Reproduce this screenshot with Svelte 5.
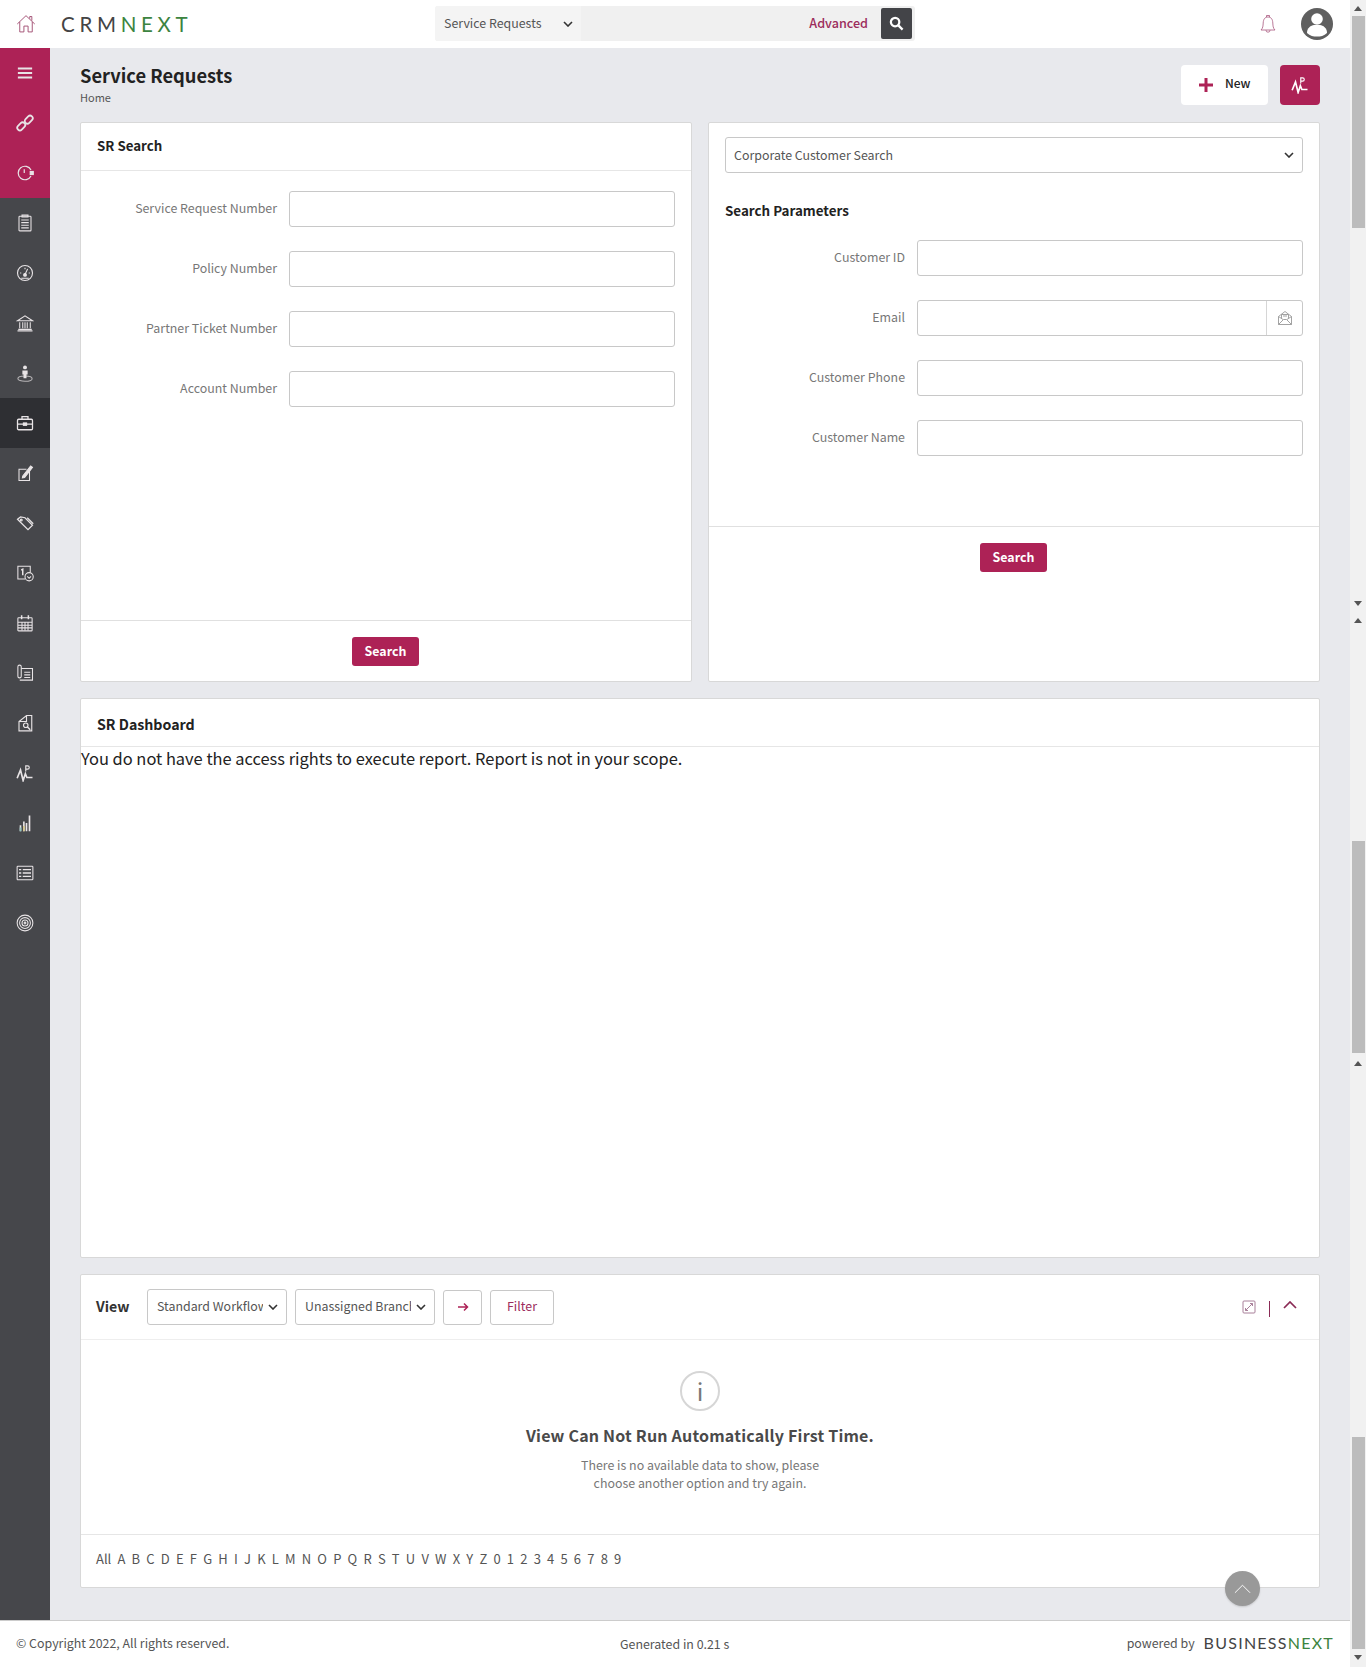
<script>
  const letters = ['All','A','B','C','D','E','F','G','H','I','J','K','L','M','N','O','P','Q','R','S','T','U','V','W','X','Y','Z','0','1','2','3','4','5','6','7','8','9'];
  const srFields = ['Service Request Number','Policy Number','Partner Ticket Number','Account Number'];
</script>

{#snippet pulse()}
  <svg viewBox="0 0 24 24" class="ic" fill="none" stroke="currentColor" stroke-width="1.5"><path d="M1.5 19 L6 8 L9.5 22 L12.5 13 L14.5 18 H22" stroke-width="2.2"/><path d="M13 10 V2.5 H15.5 a2 2 0 0 1 0 4.4 H13" stroke-width="1.5"/></svg>
{/snippet}
{#snippet chevron()}
  <svg class="chev" viewBox="0 0 10 6" fill="none" stroke="currentColor" stroke-width="1.6"><path d="M1 1 L5 5 L9 1"/></svg>
{/snippet}

<div class="page">
  <div class="app">
    <header class="top">
      <div class="top-left">
        <svg class="home" viewBox="0 0 24 24" fill="none" stroke="#a04a70" stroke-width="1.1"><path d="M1.5 12 L12 2 L22.5 12"/><path d="M4.5 9.5 V21.5 H9.5 V14.5 H14.5 V21.5 H19.5 V9.5"/><path d="M16.5 5.5 V3 H19 V8"/></svg>
        <div class="logo">CRM<span class="green">NEXT</span></div>
      </div>
      <div class="search">
        <div class="search-type"><span>Service Requests</span>{@render chevron()}</div>
        <div class="search-fill"></div>
        <span class="adv">Advanced</span>
        <div class="search-btn">
          <svg viewBox="0 0 16 16" fill="none" stroke="#fff" stroke-width="2.4"><circle cx="6.5" cy="6.5" r="4.5"/><path d="M10 10 L14.5 14.5"/></svg>
        </div>
      </div>
      <div class="top-right">
        <svg class="bell" viewBox="0 0 16 20" fill="none" stroke="#a8577d" stroke-width="0.8"><path d="M1 16 C3 14 3 12 3.2 9 C3.4 5 5 3 8 3 C11 3 12.6 5 12.8 9 C13 12 13 14 15 16 Z"/><path d="M6.5 3 V1.5 H9.5 V3 M6 16.2 a2 2 0 0 0 4 0"/></svg>
        <svg class="avatar" viewBox="0 0 32 32"><circle cx="16" cy="16" r="16" fill="#5f5f5f"/><circle cx="16" cy="11" r="5.8" fill="#fff"/><path d="M6 25 C6 19.5 10 17.5 13 17 H19 C22 17.5 26 19.5 26 25 C23 28 19.5 28.5 16 28.5 C12.5 28.5 9 28 6 25 Z" fill="#fff"/></svg>
      </div>
    </header>

    <div class="mid">
      <nav class="side">
        <div class="crimson">
          <div class="nav"><svg viewBox="0 0 24 24" class="ic" fill="none" stroke="currentColor" stroke-width="2.4"><path d="M2.5 6 H21.5 M2.5 12 H21.5 M2.5 18 H21.5"/></svg></div>
          <div class="nav"><svg viewBox="0 0 24 24" class="ic" fill="none" stroke="currentColor" stroke-width="2.4"><rect x="1" y="13" width="12" height="7" rx="3.5" transform="rotate(-45 7 16.5)"/><rect x="11" y="4" width="12" height="7" rx="3.5" transform="rotate(-45 17 7.5)"/></svg></div>
          <div class="nav"><svg viewBox="0 0 24 24" class="ic" fill="none" stroke="currentColor" stroke-width="1.6"><path d="M20 8 A9 9 0 1 0 20 16"/><path d="M11 7 V12"/><rect x="19" y="10" width="4" height="4" fill="currentColor"/></svg></div>
        </div>
        <div class="dark">
          <div class="nav"><svg viewBox="0 0 24 24" class="ic" fill="none" stroke="currentColor" stroke-width="1.4"><rect x="4" y="3" width="16" height="19.5" rx="1"/><path d="M8 1.5 H16 V4 H8 Z M7 8 H17 M7 11.5 H17 M7 15 H17 M7 18.5 H17"/></svg></div>
          <div class="nav"><svg viewBox="0 0 24 24" class="ic" fill="none" stroke="currentColor" stroke-width="1.5"><circle cx="12" cy="12" r="10"/><path d="M7 19 H17 M12 14 L15.5 6.5 M5.5 12 H7 M17 12 H18.5 M12 5 V7"/><circle cx="12" cy="14.5" r="1.8" fill="currentColor"/></svg></div>
          <div class="nav"><svg viewBox="0 0 24 24" class="ic" fill="none" stroke="currentColor" stroke-width="1.4"><path d="M2 9 L12 2.5 L22 9 Z M3 20.5 H21 M2 22.5 H22 M5 11 V19 M9 11 V19 M12 11 V19 M15 11 V19 M19 11 V19"/></svg></div>
          <div class="nav"><svg viewBox="0 0 24 24" class="ic" fill="currentColor"><circle cx="12" cy="4.5" r="2.6"/><path d="M8.5 8.5 H15.5 V14 H14 V19 H10 V14 H8.5 Z"/><ellipse cx="12" cy="19.5" rx="9.5" ry="3.4" fill="none" stroke="currentColor" stroke-width="1.4" opacity=".7"/></svg></div>
          <div class="nav active"><svg viewBox="0 0 24 24" class="ic" fill="none" stroke="currentColor" stroke-width="1.7"><rect x="2" y="7" width="20" height="14" rx="1.5"/><path d="M8 7 V3.5 H16 V7 M2 13.5 H22"/><rect x="10" y="12" width="4" height="3" fill="currentColor"/></svg></div>
          <div class="nav"><svg viewBox="0 0 24 24" class="ic" fill="none" stroke="currentColor" stroke-width="1.4"><path d="M18 9 V22 H4 V7 H14"/><path d="M9 16 L19.5 2.5 L22 4.5 L11.5 18 L8.5 18.5 Z" fill="currentColor"/></svg></div>
          <div class="nav"><svg viewBox="0 0 24 24" class="ic" fill="none" stroke="currentColor" stroke-width="1.6"><path d="M2 7 L6 4 L12 5 L22 15 L16 21 L6 11 Z"/><circle cx="7" cy="8" r="1.2"/><path d="M15 5 L23 13"/></svg></div>
          <div class="nav"><svg viewBox="0 0 24 24" class="ic" fill="none" stroke="currentColor" stroke-width="1.4"><path d="M12 20 H2.5 V3 H19 V11"/><path d="M7 8 L9 7 V15" stroke-width="2"/><circle cx="17.5" cy="17" r="5.5"/><path d="M15 16.5 L17.5 19 L20 16.5"/></svg></div>
          <div class="nav"><svg viewBox="0 0 24 24" class="ic" fill="none" stroke="currentColor" stroke-width="1.4"><rect x="2.5" y="5" width="19" height="17.5" rx="1"/><path d="M2.5 11 H21.5 M2.5 15 H21.5 M2.5 18.5 H21.5 M8 11 V22 M12 11 V22 M16 11 V22"/><path d="M7.5 1.5 V7 M16.5 1.5 V7" stroke-width="2"/></svg></div>
          <div class="nav"><svg viewBox="0 0 24 24" class="ic" fill="none" stroke="currentColor" stroke-width="1.4"><rect x="2.5" y="1.5" width="4.5" height="17" rx="2.2"/><path d="M7 6 H22 V21.5 H5 M11 11 H19 M11 14.5 H19 M11 18 H19"/></svg></div>
          <div class="nav"><svg viewBox="0 0 24 24" class="ic" fill="none" stroke="currentColor" stroke-width="1.5"><path d="M14 2 H21 V22.5 H4 V10 Z M14 2 V10 H4"/><circle cx="13" cy="15" r="3"/><path d="M15 17 L19 21" stroke-width="2"/></svg></div>
          <div class="nav">{@render pulse()}</div>
          <div class="nav"><svg viewBox="0 0 24 24" class="ic" fill="none" stroke="currentColor" stroke-width="2.2"><path d="M6 23 V15 M10.5 23 V10 M14 23 V12 M18 23 V2"/><path d="M6 23 V18" stroke="#8fc7c0"/><path d="M10.5 23 V16" stroke="#d8c88c"/></svg></div>
          <div class="nav"><svg viewBox="0 0 24 24" class="ic" fill="none" stroke="currentColor" stroke-width="1.4"><rect x="1.5" y="3" width="21" height="18" rx="1"/><path d="M9 7.5 H20 M9 12 H20 M9 16.5 H20 M4 7.5 H7 M4 12 H7 M4 16.5 H7" stroke-width="1.7"/></svg></div>
          <div class="nav"><svg viewBox="0 0 24 24" class="ic" fill="none" stroke="currentColor" stroke-width="1.4"><circle cx="12" cy="12" r="10.5"/><circle cx="12" cy="12" r="7.2"/><circle cx="12" cy="12" r="4"/><circle cx="12" cy="12" r="1.2"/></svg></div>
        </div>
      </nav>

      <main class="main">
        <div class="title-row">
          <div>
            <h1>Service Requests</h1>
            <div class="crumb">Home</div>
          </div>
          <div class="actions">
            <button class="new"><svg viewBox="0 0 14 14" fill="#ad2256"><path d="M5.5 0 H8.5 V5.5 H14 V8.5 H8.5 V14 H5.5 V8.5 H0 V5.5 H5.5 Z"/></svg><span>New</span></button>
            <button class="pulse-btn">{@render pulse()}</button>
          </div>
        </div>

        <div class="two">
          <section class="card search-card">
            <div class="card-head">SR Search</div>
            <div class="form sr-form">
              {#each srFields as f}
                <div class="row"><label>{f}</label><div class="input"></div></div>
              {/each}
            </div>
            <div class="card-foot"><button class="primary">Search</button></div>
          </section>
          <section class="card search-card">
            <div class="right-top">
              <div class="select-wide"><span>Corporate Customer Search</span>{@render chevron()}</div>
              <div class="params">Search Parameters</div>
              <div class="form cust-form">
                <div class="row"><label>Customer ID</label><div class="input"></div></div>
                <div class="row"><label>Email</label><div class="input group"><div class="addon">
                  <svg viewBox="0 0 16 16" fill="none" stroke="#999" stroke-width="0.9"><path d="M1.5 6.5 L8 1.5 L14.5 6.5 V14.5 H1.5 Z M1.5 14.5 L6.5 9.5 H9.5 L14.5 14.5 M1.5 6.5 L6 9.5 M14.5 6.5 L10 9.5"/><path d="M4.5 8 V4.5 H11.5 V8 M6 6 H10"/></svg>
                </div></div></div>
                <div class="row"><label>Customer Phone</label><div class="input"></div></div>
                <div class="row"><label>Customer Name</label><div class="input"></div></div>
              </div>
            </div>
            <div class="card-foot"><button class="primary">Search</button></div>
            <div class="grow"></div>
          </section>
        </div>

        <section class="card dash">
          <div class="card-head">SR Dashboard</div>
          <div class="deny">You do not have the access rights to execute report. Report is not in your scope.</div>
        </section>

        <section class="card view">
          <div class="view-head">
            <span class="view-label">View</span>
            <div class="vsel"><span class="clip">Standard Workflow</span>{@render chevron()}</div>
            <div class="vsel"><span class="clip">Unassigned Branch</span>{@render chevron()}</div>
            <button class="go"><svg viewBox="0 0 12 10" fill="none" stroke="#ad2256" stroke-width="1.5"><path d="M1 5 H10.5 M7 1.5 L10.5 5 L7 8.5"/></svg></button>
            <button class="filter">Filter</button>
            <div class="view-tools">
              <svg class="expand" viewBox="0 0 14 14" fill="none" stroke="#a9809a" stroke-width="1"><rect x="1" y="1" width="12" height="12" rx="1"/><path d="M3.5 10.5 L10.5 3.5 M8 3.5 H10.5 V6 M3.5 8 V10.5 H6"/></svg>
              <span class="vbar"></span>
              <svg class="up" viewBox="0 0 14 8" fill="none" stroke="#8a2a55" stroke-width="1.7"><path d="M1 7 L7 1 L13 7"/></svg>
            </div>
          </div>
          <div class="empty">
            <div class="info">i</div>
            <div class="empty-title">View Can Not Run Automatically First Time.</div>
            <p>There is no available data to show, please<br/>choose another option and try again.</p>
          </div>
          <div class="alpha">
            {#each letters as l}<span>{l}</span>{/each}
          </div>
        </section>
      </main>
    </div>

    <footer class="foot">
      <div class="copy">© Copyright 2022, All rights reserved.</div>
      <div class="gen">Generated in 0.21 s</div>
      <div class="powered"><span>powered by</span><span class="biz">BUSINESS<span class="green">NEXT</span></span></div>
    </footer>
  </div>

  <aside class="bars">
    <div class="seg seg1"><i class="a up-a"></i><b></b><span class="flex"></span><i class="a down-a"></i></div>
    <div class="seg seg2"><i class="a up-a"></i><span class="flex"></span><b></b><i class="a up-a last"></i></div>
    <div class="seg seg3"><span class="flex"></span><b></b><i class="a down-a"></i></div>
  </aside>

  <button class="to-top"><svg viewBox="0 0 18 10" fill="none" stroke="#fff" stroke-width="1"><path d="M1 9 L9 1 L17 9"/></svg></button>
</div>

<style>
  :global(body) { margin: 0; background: #e8e9ed; }
  :global(*) { box-sizing: border-box; }
  .page {
    position: relative; display: flex; width: 1366px; height: 1667px; overflow: hidden;
    font-family: "Noto Sans CJK SC", "Noto Sans", sans-serif; color: #222; font-size: 12.4px;
    background: #e8e9ed;
  }
  .app { width: 1350px; display: flex; flex-direction: column; height: 100%; }
  .green { color: #3c8440; }

  .top { height: 48px; background: #fff; display: flex; align-items: center; position: relative; flex: none; }
  .top-left { display: flex; align-items: center; width: 435px; padding-left: 16px; }
  .home { width: 20px; height: 20px; margin-right: 25px; }
  .logo { font-family: "Lato", sans-serif; font-weight: 400; font-size: 20.5px; letter-spacing: 4.7px; color: #444; line-height: 24px; }
  .search { width: 480px; height: 35px; margin-top: -1px; display: flex; align-items: center; background: #f0f0f0; border-radius: 3px; }
  .search-type { width: 146px; height: 100%; padding: 0 8px 2px 9px; background: #f4f4f4; display: flex; justify-content: space-between; align-items: center; font-size: 12.4px; color: #555; line-height: 20px; border-radius: 3px 0 0 3px; }
  .chev { width: 10px; height: 6px; color: #333; flex: none; }
  .search-type .chev { margin-top: 2px; }
  .search-fill { flex: 1; }
  .adv { color: #9c2c5c; font-size: 12.6px; font-weight: 500; line-height: 20px; margin-right: 13px; margin-top: -1px; }
  .search-btn { width: 31px; height: 31px; background: #434448; border-radius: 2px; margin-right: 3px; display: flex; align-items: center; justify-content: center; }
  .search-btn svg { width: 15px; height: 15px; }
  .top-right { margin-left: auto; display: flex; align-items: center; padding-right: 17px; }
  .bell { width: 16px; height: 20px; margin-right: 25px; }
  .avatar { width: 32px; height: 32px; }

  .mid { flex: 1; display: flex; min-height: 0; }
  .side { width: 50px; flex: none; background: #46474b; display: flex; flex-direction: column; }
  .crimson { background: #ad2256; }
  .nav { height: 50px; display: flex; align-items: center; justify-content: center; color: #e8e4e6; }
  .nav.active { background: #2e2f33; }
  .ic { width: 18px; height: 18px; display: block; }

  .main { flex: 1; padding: 0 30px; min-width: 0; }
  .title-row { display: flex; justify-content: space-between; height: 74px; padding-top: 16px; }
  h1 { margin: 0; font-size: 18.3px; font-weight: 600; line-height: 23px; color: #222; }
  .crumb { font-size: 11px; line-height: 18px; color: #555; margin-top: 1px; }
  .actions { display: flex; gap: 12px; padding-top: 1px; }
  button { font-family: inherit; cursor: pointer; }
  .new { width: 87px; height: 40px; border: 0; background: #fff; border-radius: 4px; display: flex; align-items: center; padding: 0 0 4px 18px; gap: 12px; font-size: 12px; font-weight: 500; color: #222; line-height: 20px; }
  .new svg { width: 14px; height: 14px; margin-top: 4px; }
  .pulse-btn { width: 40px; height: 40px; background: #ad2256; border: 0; border-radius: 4px; display: flex; align-items: center; justify-content: center; color: #fff; padding: 0; }
  .pulse-btn .ic { width: 18px; height: 18px; }

  .card { background: #fff; border: 1px solid #d8d8d8; border-radius: 2px; }
  .two { display: flex; gap: 16px; height: 560px; }
  .search-card { flex: 1; display: flex; flex-direction: column; min-width: 0; }
  .card-head { height: 48px; border-bottom: 1px solid #e6e6e6; padding: 0 0 1px 16px; display: flex; align-items: center; font-size: 13.3px; font-weight: 600; color: #222; line-height: 20px; }
  .dash .card-head { font-size: 14.2px; padding: 3px 0 0 16px; }
  .form { display: flex; flex-direction: column; gap: 24px; }
  .sr-form { flex: 1; padding: 20px 16px 0 0; }
  .row { display: flex; align-items: center; }
  label { flex: 1; text-align: right; padding: 0 12px 3px 0; font-size: 12.4px; color: #777; line-height: 20px; }
  .sr-form label { flex: none; width: 208px; }
  .input { height: 36px; flex: none; width: 386px; border: 1px solid #c8c8c8; border-radius: 3px; background: #fff; display: flex; justify-content: flex-end; }
  .addon { width: 36px; border-left: 1px solid #d6d6d6; display: flex; align-items: center; justify-content: center; }
  .addon svg { width: 16px; height: 16px; }
  .card-foot { height: 61px; border-top: 1px solid #e0e0e0; display: flex; justify-content: center; align-items: flex-start; padding: 16px 1px 0 0; flex: none; }
  .primary { width: 67px; height: 29px; border: 0; border-radius: 3px; background: #ad2256; color: #fff; font-size: 12.4px; font-weight: 600; padding: 0 0 1px; line-height: 18px; }
  .right-top { padding: 14px 16px 0; height: 403px; flex: none; }
  .select-wide { height: 36px; border: 1px solid #c8c8c8; border-radius: 3px; display: flex; justify-content: space-between; align-items: center; padding: 0 8px; font-size: 12.4px; color: #555; line-height: 20px; }
  .params { margin-top: 26px; font-size: 13.4px; font-weight: 600; line-height: 22px; color: #222; margin-bottom: 19px; }
  .grow { flex: 1; }

  .dash { height: 560px; margin-top: 16px; }
  .deny { font-size: 16.43px; line-height: 22px; color: #222; }

  .view { margin-top: 16px; height: 314px; display: flex; flex-direction: column; }
  .view-head { height: 65px; flex: none; border-bottom: 1px solid #eeeeee; display: flex; align-items: center; padding: 0 15px; }
  .view-label { font-size: 14.2px; font-weight: 600; color: #333; width: 51px; line-height: 22px; padding-bottom: 2px; height: 24px; }
  .vsel { width: 140px; height: 36px; border: 1px solid #c8c8c8; border-radius: 3px; display: flex; align-items: center; justify-content: space-between; padding: 0 8px 2px 9px; margin-right: 8px; font-size: 12.4px; color: #555; line-height: 20px; }
  .vsel .chev { margin-top: 2px; }
  .clip { width: 106px; overflow: hidden; white-space: nowrap; }
  .go { width: 39px; height: 35px; background: #fff; border: 1px solid #c8c8c8; border-radius: 3px; margin-right: 8px; padding: 0; display: flex; align-items: center; justify-content: center; }
  .go svg { width: 12px; height: 10px; }
  .filter { width: 64px; height: 35px; background: #fff; border: 1px solid #c8c8c8; border-radius: 3px; padding: 0 0 3px; font-size: 12.4px; color: #9c2c5c; line-height: 20px; }
  .view-tools { margin-left: auto; display: flex; align-items: center; padding-right: 7px; }
  .expand { width: 14px; height: 14px; margin-top: -1px; }
  .vbar { width: 1px; height: 16px; background: #8a2a55; margin: 3px 13px 0 13px; }
  .up { width: 14px; height: 8px; margin-top: -4px; }
  .empty { flex: 1; display: flex; flex-direction: column; align-items: center; padding-top: 31px; }
  .info { width: 40px; height: 40px; border: 2px solid #d6d6d6; border-radius: 50%; display: flex; align-items: center; justify-content: center; font-size: 24px; font-weight: 400; color: #777; line-height: 30px; }
  .empty-title { margin-top: 11px; font-size: 16px; font-weight: 600; color: #4a4a4a; line-height: 26px; letter-spacing: .2px; }
  .empty p { margin: 8px 0 0; text-align: center; font-size: 12.4px; line-height: 18px; color: #777; }
  .alpha { height: 53px; flex: none; border-top: 1px solid #e6e6e6; display: flex; align-items: center; padding: 0 0 5px 15px; gap: 6.2px; font-size: 13px; color: #555; line-height: 20px; }

  .foot { height: 47px; flex: none; background: #fff; border-top: 1px solid #ccc; display: flex; align-items: center; padding: 0 16px 2px; font-size: 12.4px; color: #555; line-height: 20px; position: relative; }
  .copy { width: 560px; }
  .gen { margin-left: 44px; margin-top: 2px; }
  .powered { margin-left: auto; display: flex; align-items: center; gap: 9px; }
  .biz { font-family: "Lato", sans-serif; font-weight: 400; font-size: 16px; letter-spacing: 1.25px; color: #444; line-height: 20px; }

  .bars { width: 16px; height: 100%; flex: none; background: #f1f1f1; display: flex; flex-direction: column; }
  .seg { display: flex; flex-direction: column; align-items: center; }
  .seg b { display: block; width: 13px; height: 212px; background: #bcbcbc; flex: none; }
  .flex { flex: 1; }
  .seg1 { height: 612px; padding: 6px 0; }
  .seg1 b { margin-top: 5px; }
  .seg2 { height: 454px; padding-top: 6px; }
  .seg3 { flex: 1; padding-bottom: 7px; }
  .seg3 b { margin-bottom: 6px; }
  .a { display: block; width: 0; height: 0; border-left: 4px solid transparent; border-right: 4px solid transparent; flex: none; }
  .up-a { border-bottom: 5px solid #555; }
  .down-a { border-top: 5px solid #555; }
  .last { margin-top: 8px; }

  .to-top { position: absolute; left: 1225px; top: 1571px; width: 35px; height: 35px; border-radius: 50%; border: 0; background: #999; display: flex; align-items: center; justify-content: center; padding: 0; box-shadow: 0 1px 2px rgba(0,0,0,.15); }
  .to-top svg { width: 17px; height: 10px; }
</style>
